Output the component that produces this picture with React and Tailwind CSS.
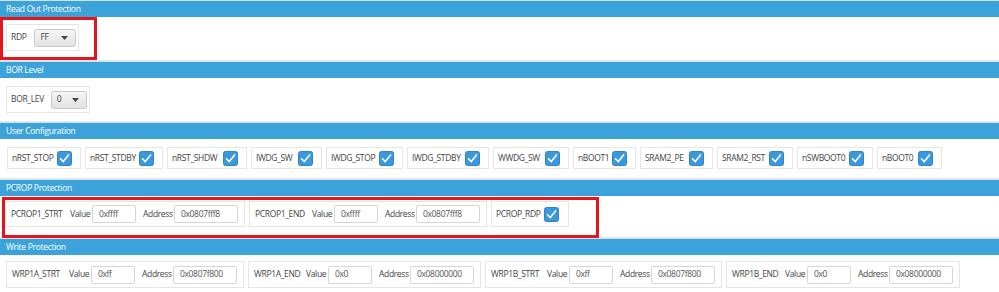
import React from 'react';

const font = { fontFamily: '"Open Sans", "Noto Sans", sans-serif' };

function Header({ title }) {
  return (
    <div className="h-[17px] bg-[#3ba3d9] border-t border-[#cfe3ef] flex items-center pl-[6px] text-white text-[8.5px] tracking-[-0.3px]">
      {title}
    </div>
  );
}

function Check() {
  return (
    <svg width="15" height="15" viewBox="0 0 15 15" className="shrink-0">
      <rect x="0.5" y="0.5" width="14" height="14" rx="2" fill="#3a98de" stroke="#2f83c6" />
      <polyline points="3.5,7.8 6.3,10.6 11.6,3.9" fill="none" stroke="#fff" strokeWidth="1.6" strokeLinecap="round" strokeLinejoin="round" />
    </svg>
  );
}

function Select({ value, w }) {
  return (
    <div className={`${w} h-[18px] rounded-[3px] border border-[#c9c9c9] bg-gradient-to-b from-[#f6f6f6] to-[#e2e2e2] flex items-center justify-between pl-[5px] pr-[7px] text-[#444]`}>
      <span>{value}</span>
      <svg width="7" height="4" viewBox="0 0 7 4"><polygon points="0,0 7,0 3.5,4" fill="#454545" /></svg>
    </div>
  );
}

function CheckItem({ label, w }) {
  return (
    <div className={`${w} h-[22px] border border-[#e6e6e6] bg-white flex items-center justify-between pl-[4px] pr-[8px] text-[#444]`}>
      <span className="whitespace-nowrap">{label}</span>
      <Check />
    </div>
  );
}

function Field({ w, children }) {
  return (
    <div className={`${w} h-[18px] shrink-0 border border-[#d6d6d6] rounded-[2px] bg-white flex items-center pl-[6px] text-[#555]`}>
      {children}
    </div>
  );
}

function RangeItem({ label, lw, value, address, h }) {
  return (
    <div className={`${h} border border-[#e6e6e6] bg-white flex items-center pl-[5px] pr-[6px] text-[#444] whitespace-nowrap`}>
      <span className={`${lw} shrink-0`}>{label}</span>
      <span className="w-[22px] shrink-0">Value</span>
      <Field w="w-[44px]">{value}</Field>
      <span className="w-[31px] ml-[7px] shrink-0">Address</span>
      <Field w="w-[64px]">{address}</Field>
    </div>
  );
}

const userConfig = [
  ['nRST_STOP', 'w-[74px]'],
  ['nRST_STDBY', 'w-[78px]'],
  ['nRST_SHDW', 'w-[80px]'],
  ['IWDG_SW', 'w-[71px]'],
  ['IWDG_STOP', 'w-[77px]'],
  ['IWDG_STDBY', 'w-[82px]'],
  ['WWDG_SW', 'w-[76px]'],
  ['nBOOT1', 'w-[63px]'],
  ['SRAM2_PE', 'w-[73px]'],
  ['SRAM2_RST', 'w-[76px]'],
  ['nSWBOOT0', 'w-[76px]'],
  ['nBOOT0', 'w-[65px]'],
];

const writeProt = [
  ['WRP1A_STRT', 'w-[57px]', '0xff', '0x0807f800'],
  ['WRP1A_END', 'w-[52px]', '0x0', '0x08000000'],
  ['WRP1B_STRT', 'w-[56px]', '0xff', '0x0807f800'],
  ['WRP1B_END', 'w-[53px]', '0x0', '0x08000000'],
];

export default function App() {
  return (
    <div style={font} className="w-[999px] h-[292px] overflow-hidden bg-white text-[8.5px] tracking-[-0.35px]">
      {/* Read Out Protection */}
      <Header title="Read Out Protection" />
      <div className="relative h-[44px] border-b border-[#e3e9ed] pt-[7px] pl-[6px]">
        <div className="w-[73px] h-[27px] border border-[#e6e6e6] flex items-center pl-[4px] gap-[8px] text-[#444]">
          <span>RDP</span>
          <Select value="FF" w="w-[42px]" />
        </div>
        <div className="absolute left-0 top-0 w-[97px] h-[43px] border-[3px] border-[#e8141b]" />
      </div>

      {/* BOR Level */}
      <Header title="BOR Level" />
      <div className="h-[44px] border-b border-[#e3e9ed] pt-[8px] pl-[6px]">
        <div className="w-[84px] h-[27px] border border-[#e6e6e6] flex items-center pl-[4px] gap-[7px] text-[#444]">
          <span>BOR_LEV</span>
          <Select value="0" w="w-[36px]" />
        </div>
      </div>

      {/* User Configuration */}
      <Header title="User Configuration" />
      <div className="h-[40px] border-b border-[#e3e9ed] pt-[8px] pl-[7px] flex items-start gap-[4px]">
        {userConfig.map(([label, w]) => (
          <CheckItem key={label} label={label} w={w} />
        ))}
      </div>

      {/* PCROP Protection */}
      <Header title="PCROP Protection" />
      <div className="relative h-[42px] border-b border-[#e3e9ed] pt-[5px] pl-[5px] flex items-start gap-[4px]">
        <RangeItem label="PCROP1_STRT" lw="w-[59px]" value="0xffff" address="0x0807fff8" h="h-[26px]" />
        <RangeItem label="PCROP1_END" lw="w-[57px]" value="0xffff" address="0x0807fff8" h="h-[26px]" />
        <div className="w-[78px] h-[26px] border border-[#e6e6e6] flex items-center justify-between pl-[4px] pr-[9px] text-[#444]">
          <span>PCROP_RDP</span>
          <Check />
        </div>
        <div className="absolute left-[2px] top-[1px] w-[597px] h-[41px] border-[3px] border-[#e8141b]" />
      </div>

      {/* Write Protection */}
      <Header title="Write Protection" />
      <div className="pt-[6px] pl-[6px] flex items-start gap-[4px]">
        {writeProt.map(([label, lw, v, a]) => (
          <RangeItem key={label} label={label} lw={lw} value={v} address={a} h="h-[27px]" />
        ))}
      </div>
    </div>
  );
}
